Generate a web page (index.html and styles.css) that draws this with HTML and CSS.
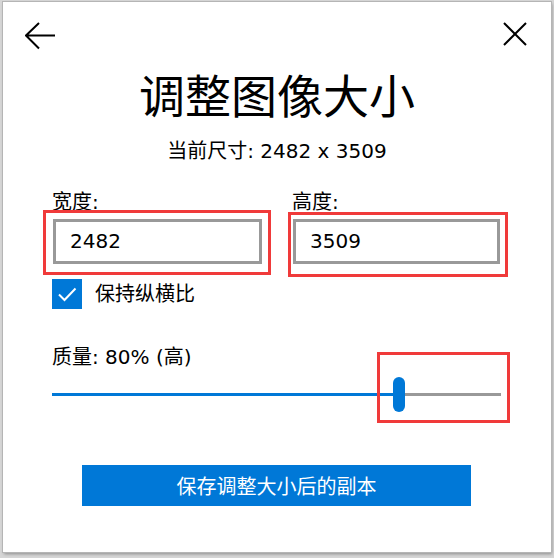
FILE: index.html
```html
<!DOCTYPE html>
<html lang="zh-CN">
<head>
<meta charset="utf-8">
<link rel="stylesheet" href="styles.css">
</head>
<body>
<div class="dialog">
  <div class="topbar">
    <svg class="icon-back" width="31" height="28" viewBox="0 0 31 28"><path d="M1 13.5 H30 M14 1 L1 13.5 L14 26.5" fill="none" stroke="#000" stroke-width="2"/></svg>
    <svg class="icon-close" width="24" height="24" viewBox="0 0 24 24"><path d="M1 1 L23 23 M23 1 L1 23" fill="none" stroke="#000" stroke-width="2"/></svg>
  </div>
  <h1 class="title">调整图像大小</h1>
  <p class="current">当前尺寸: 2482 x 3509</p>
  <div class="fields">
    <div class="field">
      <label class="field-label">宽度:</label>
      <div class="input-wrap">
        <div class="input">2482</div>
        <span class="mark mark-w"></span>
      </div>
    </div>
    <div class="field">
      <label class="field-label">高度:</label>
      <div class="input-wrap">
        <div class="input">3509</div>
        <span class="mark mark-h"></span>
      </div>
    </div>
  </div>
  <div class="check-row">
    <span class="checkbox"><svg width="30" height="30" viewBox="0 0 30 30"><path d="M7 15.5 L12.5 21 L23.5 9.5" fill="none" stroke="#fff" stroke-width="2"/></svg></span>
    <span class="check-label">保持纵横比</span>
  </div>
  <div class="quality">质量: 80% (高)</div>
  <div class="slider">
    <div class="track-fill"></div>
    <div class="thumb"></div>
    <div class="track-rest"></div>
    <span class="mark mark-s"></span>
  </div>
  <div class="actions">
    <button class="save">保存调整大小后的副本</button>
  </div>
</div>
</body>
</html>
```
FILE: styles.css
```css
html, body {
  margin: 0;
  padding: 0;
}
body {
  background: #d6d6d6;
  width: 554px;
  height: 558px;
  overflow: hidden;
  font-family: "DejaVu Sans", "Noto Sans CJK SC", sans-serif;
  color: #000;
}
.dialog {
  position: relative;
  box-sizing: border-box;
  width: 548px;
  height: 550px;
  margin: 2px 0 0 3px;
  background: #fff;
  box-shadow: 0 0 0 1px #b5b5b5, 1px 2px 3px rgba(0,0,0,0.35);
}
.topbar {
  display: flex;
  justify-content: space-between;
  align-items: flex-start;
  height: 63px;
  padding: 20px 24px 0 22px;
  box-sizing: border-box;
}
.icon-back { display: block; }
.icon-close { display: block; margin-top: 0; }
.title {
  margin: 0;
  font-family: "Noto Sans CJK SC", sans-serif;
  font-weight: 400;
  font-size: 46px;
  line-height: 56px;
  text-align: center;
}
.current {
  margin: 17px 0 0;
  font-size: 20px;
  line-height: 26px;
  text-align: center;
}
.fields {
  display: flex;
  gap: 31px;
  padding: 0 0 0 50px;
  margin-top: 26px;
}
.field {
  display: flex;
  flex-direction: column;
}
.field:first-child { width: 209px; }
.field:last-child { width: 207px; }
.field-label {
  font-size: 20px;
  line-height: 24px;
  margin-left: -1px;
}
.input-wrap {
  position: relative;
  margin-top: 5px;
}
.input {
  box-sizing: border-box;
  height: 45px;
  border: 3px solid #999;
  padding: 0 0 0 14px;
  font-size: 20px;
  line-height: 39px;
}
.mark {
  position: absolute;
  border: 3px solid #f03a3a;
  box-sizing: border-box;
  pointer-events: none;
}
.mark-w { left: -10px; top: -9px; width: 228px; height: 65px; }
.mark-h { left: -5px; top: -7px; width: 220px; height: 65px; }
.check-row {
  display: flex;
  align-items: center;
  gap: 13px;
  margin: 15px 0 0 49px;
}
.checkbox {
  width: 30px;
  height: 30px;
  background: #0078d7;
  display: block;
}
.checkbox svg { display: block; }
.check-label {
  font-size: 20px;
  line-height: 30px;
}
.quality {
  margin: 36px 0 0 49px;
  font-size: 20px;
  line-height: 24px;
}
.slider {
  position: relative;
  display: flex;
  align-items: center;
  height: 36px;
  margin: 7px 0 0 49px;
  width: 449px;
}
.track-fill {
  width: 341px;
  height: 3px;
  background: #0078d7;
}
.thumb {
  width: 12px;
  height: 35px;
  border-radius: 6px;
  background: #0078d7;
}
.track-rest {
  flex: 1;
  height: 3px;
  background: #999;
}
.mark-s { left: 325px; top: -24px; width: 133px; height: 71px; }
.actions {
  display: flex;
  justify-content: flex-start;
  margin: 53px 0 0 79px;
}
.save {
  width: 389px;
  height: 41px;
  border: 0;
  padding: 0;
  background: #0078d7;
  color: #fff;
  font-family: "Noto Sans CJK SC", sans-serif;
  font-size: 20px;
  line-height: 41px;
}
```
